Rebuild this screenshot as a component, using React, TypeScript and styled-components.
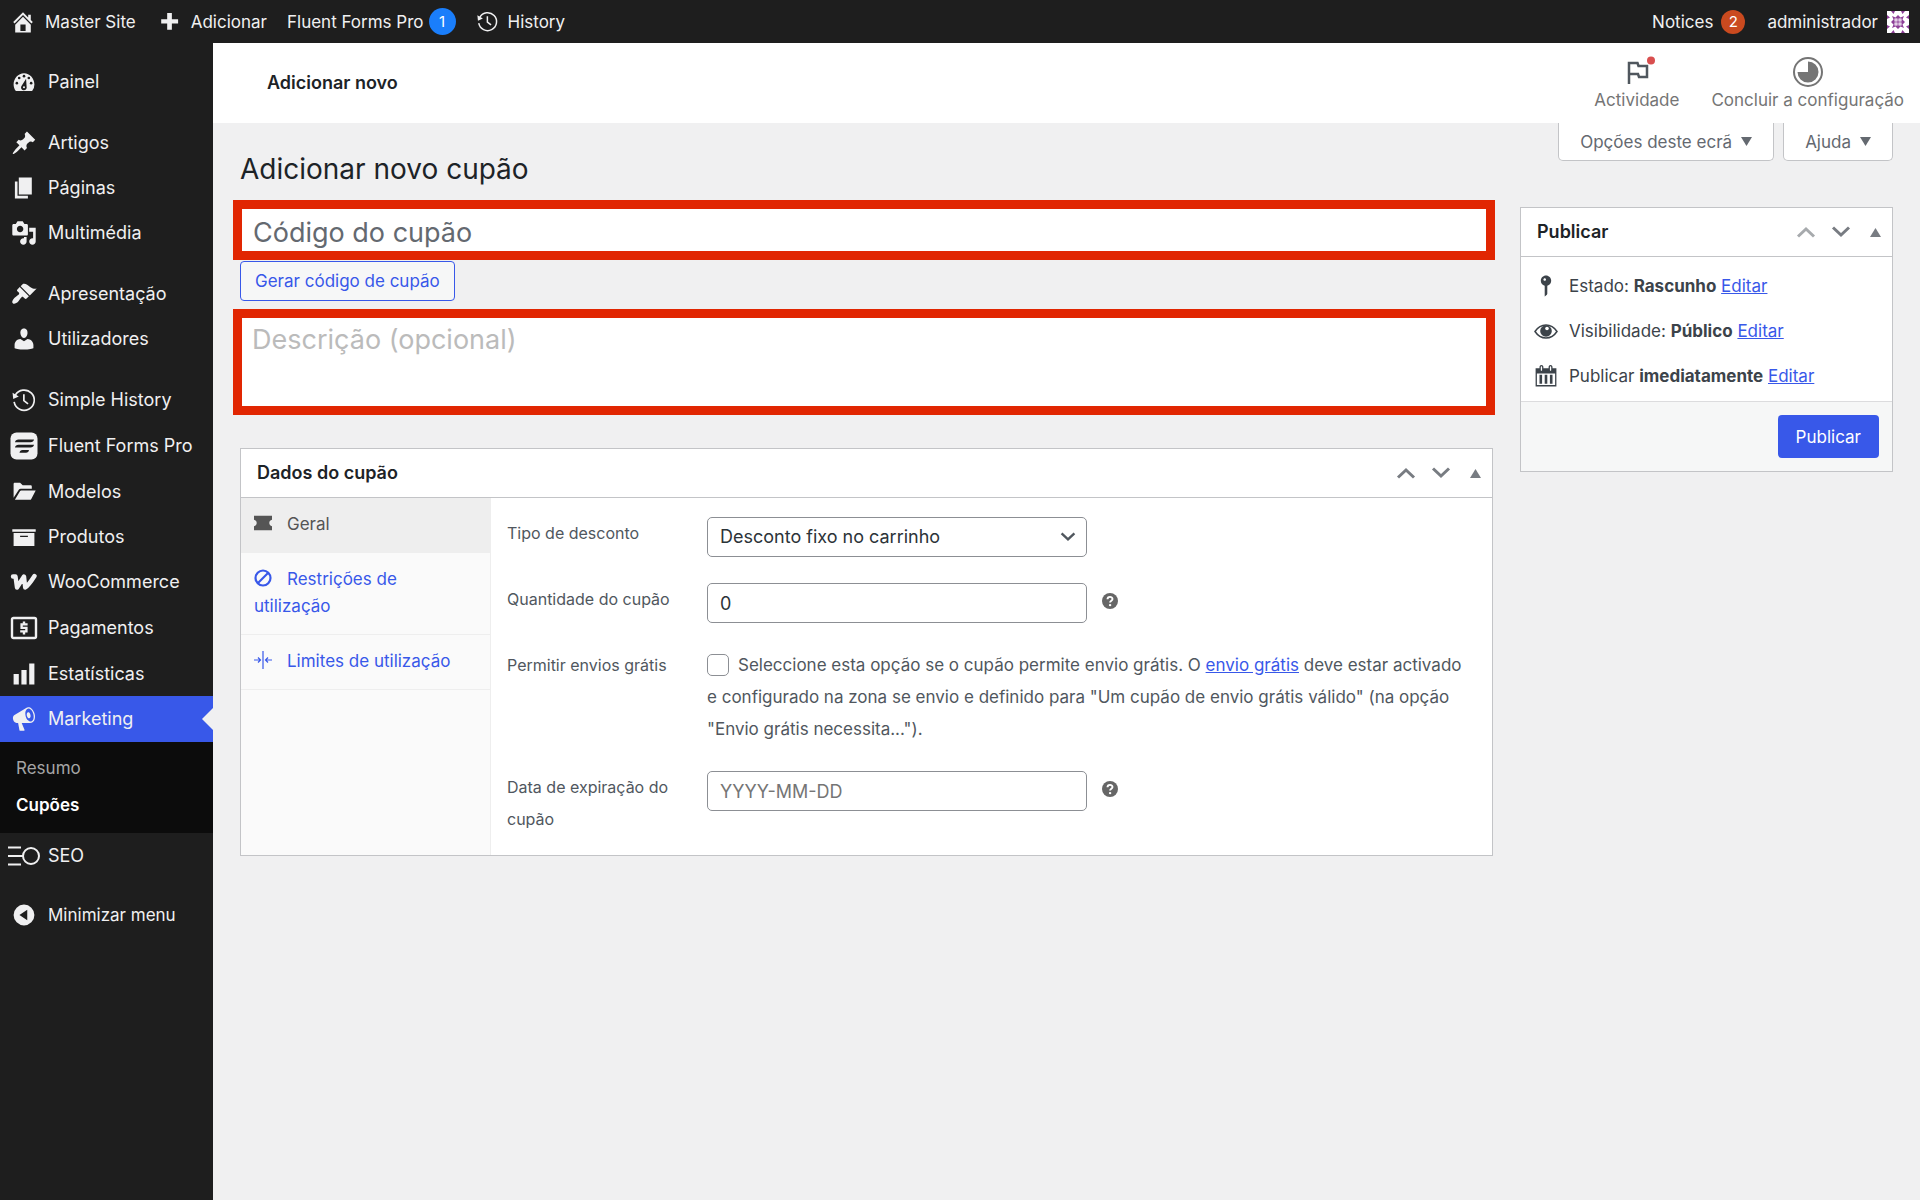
import React from 'react';
import styled, { createGlobalStyle, css } from 'styled-components';

const blue = '#3858e9';
const ink = '#1d2327';

const GlobalStyle = createGlobalStyle`
  *, *::before, *::after { box-sizing: border-box; }
  body { margin: 0; background: #f0f0f1; color: #3c434a; font: 17px/24px Inter, "Liberation Sans", sans-serif; }
  ul { list-style: none; margin: 0; padding: 0; }
  a { color: ${blue}; }
  button, input, select, textarea { font: inherit; color: inherit; }
  h1, h2, p { margin: 0; }
`;

const Page = styled.div`
  min-height: 100vh;
  display: flex;
  flex-direction: column;
`;

const AdminBar = styled.nav`
  height: 43px;
  flex: none;
  padding: 0 11px 0 10px;
  background: #1e1e1e;
  display: flex;
  align-items: center;
  justify-content: space-between;
`;

const BarGroup = styled.div<{ $gap: number }>`
  display: flex;
  align-items: center;
  gap: ${(p) => p.$gap}px;
`;

const BarLink = styled.a<{ $gap?: number }>`
  display: flex;
  align-items: center;
  gap: ${(p) => p.$gap ?? 9}px;
  color: #f0f0f1;
  text-decoration: none;
  white-space: nowrap;
`;

const Badge = styled.span<{ $color: string; $size: number }>`
  min-width: ${(p) => p.$size}px;
  height: ${(p) => p.$size}px;
  border-radius: 14px;
  background: ${(p) => p.$color};
  color: #fff;
  font-size: 15px;
  line-height: ${(p) => p.$size}px;
  text-align: center;
`;

const Body = styled.div`
  flex: 1;
  display: flex;
`;

const Sidebar = styled.nav`
  width: 213px;
  flex: none;
  padding-top: 16px;
  background: #1e1e1e;
`;

const MenuGroup = styled.ul`
  margin-bottom: 16px;
`;

const itemStyles = css<{ $tall?: boolean; $active?: boolean }>`
  width: 100%;
  height: ${(p) => (p.$tall ? 46 : 45)}px;
  padding: 0 0 0 8px;
  border: 0;
  display: flex;
  align-items: center;
  gap: 8px;
  background: ${(p) => (p.$active ? blue : 'transparent')};
  color: #f0f0f1;
  font-size: 18px;
  text-decoration: none;
  white-space: nowrap;
`;

const MenuLink = styled.a<{ $tall?: boolean; $active?: boolean }>`
  ${itemStyles}
  position: relative;
  ${(p) =>
    p.$active &&
    css`
      &::after {
        content: '';
        position: absolute;
        right: 0;
        top: 12px;
        border: 11px solid transparent;
        border-left-width: 0;
        border-right-color: #f0f0f1;
      }
    `}
`;

const CollapseButton = styled.button`
  ${itemStyles}
  height: 40px;
  font-size: 17px;
`;

const IconSlot = styled.span<{ $size?: number }>`
  flex: none;
  width: ${(p) => p.$size ?? 32}px;
  display: inline-flex;
  align-items: center;
  justify-content: center;
`;

const SubMenu = styled.ul`
  padding: 8px 0 9px;
  background: #0c0c0c;
`;

const SubLink = styled.a<{ $current?: boolean }>`
  display: block;
  padding: 0 16px;
  font-size: 17px;
  line-height: 37px;
  text-decoration: none;
  color: ${(p) => (p.$current ? '#fff' : '#a5a5a5')};
  font-weight: ${(p) => (p.$current ? 600 : 400)};
`;

const Content = styled.div`
  flex: 1;
  min-width: 0;
`;

const Header = styled.header`
  height: 80px;
  padding: 0 16px 0 54px;
  background: #fff;
  display: flex;
  align-items: center;
  justify-content: space-between;
`;

const HeaderTitle = styled.h2`
  font-size: 18px;
  font-weight: 600;
  color: ${ink};
`;

const HeaderActions = styled.div`
  display: flex;
  gap: 32px;
`;

const HeaderButton = styled.button`
  padding: 2px 0 0;
  border: 0;
  background: none;
  display: flex;
  flex-direction: column;
  align-items: center;
  color: #757575;
  font-size: 17px;
  svg { overflow: visible; }
`;

const MetaTabs = styled.div`
  display: flex;
  justify-content: flex-end;
  gap: 9px;
`;

const MetaTab = styled.button`
  height: 38px;
  padding: 0 21px;
  border: 1px solid #c3c4c7;
  border-top: 0;
  border-radius: 0 0 5px 5px;
  background: #fff;
  color: #646970;
  display: flex;
  align-items: center;
  gap: 9px;
`;

const Workspace = styled.main`
  padding: 0 27px 40px;
`;

const PageTitle = styled.h1`
  padding: 26px 0 11px;
  font-size: 28px;
  font-weight: 400;
  line-height: 40px;
  color: ${ink};
`;

const TitleRow = styled.div`
  display: flex;
  justify-content: space-between;
  align-items: flex-start;
`;

const Columns = styled.div`
  display: grid;
  grid-template-columns: minmax(0, 1fr) 373px;
  gap: 27px;
  align-items: start;
`;

const MainColumn = styled.div`
  min-width: 0;
`;

const SideColumn = styled.aside`
  padding-top: 7px;
`;

const Highlight = styled.div`
  margin: 0 -2px 0 -7px;
  border: 9px solid #e12602;
  background: #fff;
  display: flex;
`;

const TitleInput = styled.input`
  width: 100%;
  height: 42px;
  padding: 4px 11px 0;
  border: 0;
  outline: 0;
  background: none;
  font-size: 27px;
  &::placeholder { color: #646970; opacity: 1; }
`;

const DescriptionInput = styled.textarea`
  width: 100%;
  height: 88px;
  padding: 4px 10px;
  border: 0;
  outline: 0;
  resize: none;
  display: block;
  background: none;
  font-size: 27px;
  line-height: 36px;
  &::placeholder { color: #bbb; opacity: 1; }
`;

const OutlineButton = styled.button`
  display: block;
  height: 40px;
  margin: 1px 0 8px;
  padding: 0 14px;
  border: 1px solid ${blue};
  border-radius: 4px;
  background: #f6f7f7;
  color: ${blue};
`;

const Box = styled.section<{ $top?: number }>`
  margin-top: ${(p) => p.$top ?? 0}px;
  border: 1px solid #c3c4c7;
  background: #fff;
`;

const BoxHead = styled.div`
  height: 49px;
  padding: 0 7px 0 16px;
  border-bottom: 1px solid #c3c4c7;
  display: flex;
  align-items: center;
  justify-content: space-between;
`;

const BoxTitle = styled.h2`
  font-size: 18px;
  font-weight: 600;
  color: ${ink};
`;

const Handles = styled.div`
  display: flex;
  align-items: center;
`;

const Handle = styled.button<{ $muted?: boolean }>`
  width: 35px;
  height: 35px;
  padding: 0;
  border: 0;
  background: none;
  display: flex;
  align-items: center;
  justify-content: center;
  color: ${(p) => (p.$muted ? '#a7aaad' : '#787c82')};
  &:last-child { width: 20px; margin-left: 7px; }
`;

const CouponBody = styled.div`
  display: grid;
  grid-template-columns: 250px minmax(0, 1fr);
`;

const Tabs = styled.ul`
  background: #fafafa;
  border-right: 1px solid #eee;
`;

const Tab = styled.a<{ $active?: boolean }>`
  display: block;
  padding: 13px 13px 14px;
  border-bottom: 1px solid #eee;
  line-height: 27px;
  text-decoration: none;
  background: ${(p) => (p.$active ? '#eee' : 'transparent')};
  color: ${(p) => (p.$active ? '#555' : blue)};
  svg { margin-right: 15px; vertical-align: -2px; }
`;

const Form = styled.form`
  padding: 19px 16px 20px;
  display: flex;
  flex-direction: column;
  gap: 26px;
`;

const Row = styled.div`
  display: grid;
  grid-template-columns: 184px minmax(0, 1fr);
  gap: 16px;
  color: #50575e;
`;

const RowLabel = styled.label`
  font-size: 16px;
  line-height: 32px;
`;

const Control = styled.div`
  display: flex;
  gap: 15px;
  align-items: flex-start;
`;

const fieldStyles = css`
  width: 380px;
  max-width: 100%;
  height: 40px;
  padding: 0 12px;
  border: 1px solid #8c8f94;
  border-radius: 5px;
  background: #fff;
  color: #2c3338;
  font-size: 18px;
`;

const TextInput = styled.input`
  ${fieldStyles}
  &::placeholder { color: #757575; opacity: 1; }
`;

const SelectWrap = styled.div`
  display: grid;
  align-items: center;
  > * { grid-area: 1 / 1; }
  svg { justify-self: end; margin-right: 11px; pointer-events: none; }
`;

const Select = styled.select`
  ${fieldStyles}
  appearance: none;
`;

const HelpButton = styled.button`
  height: 36px;
  padding: 0;
  border: 0;
  background: none;
  color: #666;
  display: flex;
  align-items: center;
`;

const Note = styled.p`
  font-size: 17px;
  line-height: 32px;
`;

const CheckBox = styled.input`
  appearance: none;
  width: 22px;
  height: 22px;
  margin: 0 9px 0 0;
  border: 1px solid #8c8f94;
  border-radius: 5px;
  background: #fff;
  vertical-align: -5px;
`;

const StatusList = styled.ul`
  padding: 6px 12px 3px;
`;

const StatusItem = styled.li`
  display: flex;
  align-items: center;
  gap: 10px;
  height: 45px;
`;

const BoxFooter = styled.div`
  padding: 13px;
  border-top: 1px solid #dcdcde;
  background: #f6f7f7;
  display: flex;
  justify-content: flex-end;
`;

const PrimaryButton = styled.button`
  height: 43px;
  padding: 0 18px;
  border: 0;
  border-radius: 4px;
  background: ${blue};
  color: #fff;
`;

type IconProps = { d: string; size?: number };
const Dash = ({ d, size = 26 }: IconProps) => (
  <svg width={size} height={size} viewBox="0 0 20 20" fill="currentColor" fillRule="evenodd" aria-hidden="true">
    <path d={d} />
  </svg>
);

const paths = {
  home: 'M16 8.5l1.53 1.53-1.06 1.06L10 4.6l-6.47 6.49-1.06-1.06L10 2.5l4 4v-2h2v4zm-6-2.46l6 5.99V18H4v-5.97zM12 17v-5H8v5h4z',
  plus: 'M17 7.8v3.4h-4.8V16H8.6v-4.8H4V7.8h4.6V3h3.6v4.8z',
  post: 'M10.44 3.02l1.82-1.82 6.36 6.35-1.83 1.82c-1.05-.68-2.48-.57-3.41.36l-.75.75c-.92.93-1.04 2.35-.35 3.41l-1.83 1.82-2.41-2.41-2.8 2.79c-.42.42-3.38 2.71-3.8 2.29s1.86-3.39 2.28-3.81l2.79-2.79L4.1 9.36l1.83-1.82c1.05.69 2.48.57 3.4-.36l.75-.75c.93-.92 1.05-2.35.36-3.41z',
  page: 'M6 15V2h10v13H6zm-1 1h8v2H3V5h2v11z',
  media:
    'M13 11V4c0-.55-.45-1-1-1h-1.67L9 1H5L3.67 3H2c-.55 0-1 .45-1 1v7c0 .55.45 1 1 1h10c.55 0 1-.45 1-1zM7 4.5c1.38 0 2.5 1.12 2.5 2.5S8.38 9.5 7 9.5 4.5 8.38 4.5 7 5.62 4.5 7 4.5zM14 6h5v10.5c0 1.38-1.12 2.5-2.5 2.5S14 17.88 14 16.5s1.12-2.5 2.5-2.5c.17 0 .34.02.5.05V9h-3V6zm-4 8.05V13h2v3.5c0 1.38-1.12 2.5-2.5 2.5S7 17.88 7 16.5 8.12 14 9.5 14c.17 0 .34.02.5.05z',
  appearance:
    'M14.48 11.06L7.41 3.99l1.5-1.5c.5-.56 2.3-.47 3.51.32 1.21.8 1.43 1.28 2.91 2.1 1.18.64 2.45 1.26 4.45.85zm-.71.71L6.7 4.7 4.93 6.47c-.39.39-.39 1.02 0 1.41l1.06 1.06c.39.39.39 1.03 0 1.42-.6.6-1.43 1.11-2.21 1.69-.35.26-.7.53-1.01.84C1.43 14.23.4 16.08 1.4 17.07c.99 1 2.84-.03 4.18-1.36.31-.31.58-.66.85-1.02.57-.78 1.08-1.61 1.69-2.21.39-.39 1.02-.39 1.41 0l1.06 1.06c.39.39 1.02.39 1.41 0z',
  users:
    'M10 9.25c-2.27 0-2.73-3.44-2.73-3.44C7 4.02 7.82 2 9.97 2c2.16 0 2.98 2.02 2.71 3.81 0 0-.41 3.44-2.68 3.44zm0 2.57L12.72 10c2.39 0 4.52 2.33 4.52 4.53v2.49s-3.65 1.13-7.24 1.13c-3.65 0-7.24-1.13-7.24-1.13v-2.49c0-2.25 1.94-4.48 4.47-4.48z',
  folder: 'M2 14.500V3.800c0-.6.4-1 1-1h4l2 2h6c.6 0 1 .4 1 1V7.500H7.500c-.7 0-1.200.300-1.500.800zM3 16l4-6.700c.2-.3.5-.5.9-.5H19l-3.400 6.500c-.2.4-.6.7-1 .7z',
  archive: 'M19 4v2H1V4h18zM2 7h16v10H2V7zm11 3V9H7v1h6z',
  chart: 'M18 18V2h-4v16h4zm-6 0V7H8v11h4zm-6 0v-8H2v8h4z',
  megaphone:
    'M18.15 5.94c.46 1.62.38 3.22-.02 4.48-.42 1.28-1.26 2.18-2.3 2.48-.16.06-.26.06-.4.06-.06.02-.12.02-.18.02-.06.02-.14.02-.22.02h-6.8l2.22 5.5c.02.14-.06.26-.14.34-.08.1-.24.16-.34.16H6.95c-.1 0-.26-.06-.34-.16-.08-.08-.16-.2-.14-.34l-1-5.5H4.25l-.02-.02c-.5.06-1.08-.18-1.54-.62s-.88-1.08-1.06-1.88c-.24-.8-.2-1.56-.02-2.2.18-.62.58-1.08 1.06-1.3l.02-.02 9-5.4c.1-.06.18-.1.24-.16.06-.04.14-.08.24-.12.16-.08.28-.12.5-.18 1.04-.3 2.24.1 3.22.98s1.84 2.24 2.26 3.86zm-2.58 5.98h-.02c.4-.1.74-.34 1.04-.7.58-.7.86-1.76.86-3.04 0-.64-.1-1.3-.28-1.98-.34-1.36-1.02-2.5-1.78-3.24s-1.68-1.1-2.46-.88c-.82.22-1.4.96-1.7 2-.32 1.04-.28 2.36.06 3.72.38 1.36 1 2.5 1.8 3.24.78.74 1.62 1.1 2.48.88zm-2.54-7.08c.22-.04.42-.02.62.04.38.16.76.48 1.02 1s.42 1.2.42 1.78c0 .3-.04.56-.12.8-.18.48-.44.84-.86.94-.34.1-.8-.06-1.14-.4s-.64-.86-.78-1.5c-.18-.62-.12-1.24.02-1.72s.48-.84.82-.94z',
  collapse: 'M10 2a8 8 0 1 0 0 16 8 8 0 0 0 0-16zM12.5 6v8L6.5 10z',
  pin: 'M14 6c0 1.86-1.28 3.41-3 3.86V16c0 1-2 2-2 2V9.86c-1.72-.45-3-2-3-3.86 0-2.21 1.79-4 4-4s4 1.79 4 4zM8 5c0 .55.45 1 1 1s1-.45 1-1-.45-1-1-1-1 .45-1 1z',
  calendar:
    'M15 4h3v14H2V4h3V3c0-.83.67-1.5 1.5-1.5S8 2.17 8 3v1h4V3c0-.83.67-1.5 1.5-1.5S15 2.17 15 3v1zM6 3v2.5c0 .28.22.5.5.5s.5-.22.5-.5V3c0-.28-.22-.5-.5-.5S6 2.72 6 3zm7 0v2.5c0 .28.22.5.5.5s.5-.22.5-.5V3c0-.28-.22-.5-.5-.5s-.5.22-.5.5zm4 14V8H3v9h14zM7 16V9H5v7h2zm4 0V9H9v7h2zm4 0V9h-2v7h2z',
  ticket: 'M0 2h20v4.5c-2 .5-3 1.8-3 3.5s1 3 3 3.5V18H0v-4.5c2-.5 3-1.8 3-3.5s-1-3-3-3.5z',
};

const DashboardIcon = () => (
  <svg width="26" height="26" viewBox="0 0 20 20" aria-hidden="true">
    <path fill="currentColor" d="M3.76 17h12.48A7.8 7.8 0 0 0 18 11.9C18 7.2 14.4 3.2 10 3.2s-8 4-8 8.7c0 1.9.66 3.8 1.76 5.1z" />
    <g fill="#1e1e1e">
      <circle cx="10" cy="5.5" r="1" />
      <circle cx="6.3" cy="6.9" r="1" />
      <circle cx="13.7" cy="6.9" r="1" />
      <circle cx="4.5" cy="10.9" r="1" />
      <circle cx="15.5" cy="10.9" r="1" />
      <path d="M11.6 7.5L12 13.5a2.2 2.2 0 1 1-3.8-.7z" />
    </g>
    <circle cx="10" cy="14" r=".8" fill="currentColor" />
  </svg>
);

const HistoryIcon = ({ size = 26 }: { size?: number }) => (
  <svg width={size} height={size} viewBox="0 0 20 20" fill="none" stroke="currentColor" strokeWidth="1.3" aria-hidden="true">
    <path d="M3.3 6.3A7.8 7.8 0 1 1 2.4 11.500" />
    <path d="M9.9 5.5v5l3.2 2.5" />
    <path d="M1.2 4.5l.5 4.8 4.3-2z" fill="currentColor" stroke="none" />
  </svg>
);

const FluentIcon = () => (
  <svg width="28" height="28" viewBox="0 0 28 28" aria-hidden="true">
    <rect x=".5" y=".5" width="27" height="27" rx="6" fill="currentColor" />
    <g fill="#1e1e1e">
      <path d="M8.5 7.5H24c-.3 1.900-1.600 2.700-3.500 2.700H5c.3-1.900 1.600-2.700 3.500-2.700z" />
      <path d="M8.5 12.800H24c-.3 1.900-1.600 2.700-3.500 2.700H5c.3-1.900 1.600-2.700 3.500-2.700z" />
      <path d="M12.500 18H19c-.3 1.900-1.400 2.700-3 2.700H9.500c.3-1.900 1.400-2.700 3-2.700z" />
    </g>
  </svg>
);

const WooIcon = () => (
  <svg width="28" height="18" viewBox="0 0 28 18" fill="none" stroke="currentColor" strokeWidth="4.4" strokeLinecap="round" strokeLinejoin="round" aria-hidden="true">
    <path d="M3 3.5h2.5l1.5 11L14 3.5l1.2 11C17.5 13 21 8.5 24.5 3" />
  </svg>
);

const PaymentsIcon = () => (
  <svg width="28" height="24" viewBox="0 0 28 24" fill="none" stroke="currentColor" strokeWidth="2.4" aria-hidden="true">
    <rect x="2" y="2" width="24" height="20" rx="1.5" />
    <path d="M17.6 8.400h-6v3.500h4.800v3.500h-6.200M14 5.500v3M14 15v3.500" strokeWidth="2.400" />
  </svg>
);

const SeoIcon = () => (
  <svg width="32" height="20" viewBox="0 0 32 20" fill="none" stroke="currentColor" strokeWidth="2" aria-hidden="true">
    <path d="M0 1.5h13M0 10h15M0 18.5h13" />
    <circle cx="23" cy="10" r="8" />
  </svg>
);

const AvatarIcon = () => (
  <svg width="22" height="22" viewBox="0 0 22 22" aria-hidden="true">
    <rect width="22" height="22" fill="#fff" />
    <g fill="#8d3f97">
      <path d="M4 0h4L6.500 3zM14 0h4l-2.500 3zM4 22h4l-1.500-3zM14 22h4l-2.500-3z" />
      <path d="M0 4v4l3-1.500zM0 14v4l3-2.500zM22 4v4l-3-1.500zM22 14v4l-3-2.500z" />
      <path d="M5 5l3.500 1.500L11 4l2.500 2.500L17 5l-1.500 3.500L18 11l-2.500 2.500L17 17l-3.500-1.500L11 18l-2.500-2.500L5 17l1.500-3.500L4 11l2.500-2.500z" />
    </g>
    <path d="M7.500 7.500h3v3h-3zM11.500 7.500h3v3h-3zM7.500 11.500h3v3h-3zM11.500 11.500h3v3h-3z" fill="#fff" />
    <path d="M8.500 8.500h1v1h-1zM12.500 8.500h1v1h-1zM8.500 12.500h1v1h-1zM12.500 12.500h1v1h-1z" fill="#8d3f97" />
  </svg>
);

const FlagIcon = () => (
  <svg width="32" height="32" viewBox="0 0 32 32" fill="none" aria-hidden="true">
    <path d="M8 28V7h8.5l1 3H26v11h-8l-1-3H8" stroke="#50575e" strokeWidth="2.5" />
    <circle cx="30" cy="4.5" r="4" fill="#d94f4f" />
  </svg>
);

const ProgressIcon = () => (
  <svg width="32" height="32" viewBox="0 0 32 32" aria-hidden="true">
    <circle cx="16" cy="16" r="14" fill="none" stroke="#757575" strokeWidth="2" />
    <path d="M16 16V5.500A10.500 10.500 0 1 1 5.500 16z" fill="#757575" />
  </svg>
);

const Chevron = ({ up, small }: { up?: boolean; small?: boolean }) => (
  <svg width={small ? 16 : 20} height={small ? 10 : 12} viewBox="0 0 20 12" fill="none" stroke="currentColor" strokeWidth="3" aria-hidden="true">
    <path d={up ? 'M2 10.5l8-7.5 8 7.5' : 'M2 1.5L10 9l8-7.5'} />
  </svg>
);

const Triangle = ({ up }: { up?: boolean }) => (
  <svg width="11" height="9" viewBox="0 0 11 9" fill="currentColor" aria-hidden="true">
    <path d={up ? 'M5.5 0L11 9H0z' : 'M0 0h11L5.5 9z'} />
  </svg>
);

const ForbiddenIcon = () => (
  <svg width="18" height="18" viewBox="0 0 18 18" fill="none" stroke="currentColor" strokeWidth="2.2" aria-hidden="true">
    <circle cx="9" cy="9" r="7.5" />
    <path d="M4 14L14 4" />
  </svg>
);

const LimitIcon = () => (
  <svg width="18" height="18" viewBox="0 0 18 18" fill="none" stroke="currentColor" strokeWidth="1.2" aria-hidden="true">
    <path d="M9 0v18M0 9h6M18 9h-6M4 6.5L6.5 9 4 11.5M14 6.5L11.5 9l2.5 2.5" />
  </svg>
);

const EyeIcon = () => (
  <svg width="26" height="26" viewBox="0 0 26 26" fill="none" aria-hidden="true">
    <path d="M2 13.5C5 9 9 7 13 7s8 2 11 6.5C21 18 17 20 13 20S5 18 2 13.500z" stroke="currentColor" strokeWidth="1.5" />
    <circle cx="13" cy="13" r="5.8" fill="currentColor" />
    <circle cx="14" cy="10.5" r="1.8" fill="#fff" />
  </svg>
);

const HelpIcon = () => (
  <svg width="16" height="16" viewBox="0 0 16 16" fill="none" aria-hidden="true">
    <circle cx="8" cy="8" r="8" fill="currentColor" />
    <path d="M5.5 6.3C5.5 3 10.5 3.2 10.5 6c0 1.7-2.4 1.7-2.4 3.6" stroke="#fff" strokeWidth="1.9" />
    <circle cx="8.1" cy="12.1" r="1.2" fill="#fff" />
  </svg>
);

type Item = { label: string; icon: React.ReactNode; tall?: boolean; active?: boolean; sub?: string[] };

const groups: Item[][] = [
  [{ label: 'Painel', icon: <DashboardIcon /> }],
  [
    { label: 'Artigos', icon: <Dash d={paths.post} /> },
    { label: 'Páginas', icon: <Dash d={paths.page} /> },
    { label: 'Multimédia', icon: <Dash d={paths.media} /> },
  ],
  [
    { label: 'Apresentação', icon: <Dash d={paths.appearance} /> },
    { label: 'Utilizadores', icon: <Dash d={paths.users} /> },
  ],
  [
    { label: 'Simple History', icon: <HistoryIcon />, tall: true },
    { label: 'Fluent Forms Pro', icon: <FluentIcon />, tall: true },
    { label: 'Modelos', icon: <Dash d={paths.folder} /> },
    { label: 'Produtos', icon: <Dash d={paths.archive} /> },
    { label: 'WooCommerce', icon: <WooIcon />, tall: true },
    { label: 'Pagamentos', icon: <PaymentsIcon />, tall: true },
    { label: 'Estatísticas', icon: <Dash d={paths.chart} /> },
    { label: 'Marketing', icon: <Dash d={paths.megaphone} />, tall: true, active: true, sub: ['Resumo', 'Cupões'] },
    { label: 'SEO', icon: <SeoIcon />, tall: true },
  ],
];

const BoxHandles = ({ firstMuted }: { firstMuted?: boolean }) => (
  <Handles>
    <Handle type="button" aria-label="Mover para cima" $muted={firstMuted}><Chevron up /></Handle>
    <Handle type="button" aria-label="Mover para baixo"><Chevron /></Handle>
    <Handle type="button" aria-label="Alternar painel"><Triangle up /></Handle>
  </Handles>
);

export default function App() {
  return (
    <Page>
      <GlobalStyle />
      <AdminBar>
        <BarGroup $gap={20}>
          <BarLink href="#"><Dash d={paths.home} />Master Site</BarLink>
          <BarLink href="#"><Dash d={paths.plus} />Adicionar</BarLink>
          <BarLink href="#" $gap={5}>Fluent Forms Pro<Badge $color="#1a7efb" $size={27}>1</Badge></BarLink>
          <BarLink href="#"><HistoryIcon size={23} />History</BarLink>
        </BarGroup>
        <BarGroup $gap={22}>
          <BarLink href="#" $gap={8}>Notices<Badge $color="#ca4a1f" $size={24}>2</Badge></BarLink>
          <BarLink href="#">administrador<AvatarIcon /></BarLink>
        </BarGroup>
      </AdminBar>
      <Body>
        <Sidebar>
          {groups.map((group) => (
            <MenuGroup key={group[0].label}>
              {group.map((item) => (
                <li key={item.label}>
                  <MenuLink href="#" $tall={item.tall} $active={item.active}>
                    <IconSlot>{item.icon}</IconSlot>
                    {item.label}
                  </MenuLink>
                  {item.sub && (
                    <SubMenu>
                      {item.sub.map((s) => (
                        <li key={s}><SubLink href="#" $current={s === 'Cupões'}>{s}</SubLink></li>
                      ))}
                    </SubMenu>
                  )}
                </li>
              ))}
            </MenuGroup>
          ))}
          <CollapseButton type="button">
            <IconSlot><Dash d={paths.collapse} /></IconSlot>
            Minimizar menu
          </CollapseButton>
        </Sidebar>
        <Content>
          <Header>
            <HeaderTitle>Adicionar novo</HeaderTitle>
            <HeaderActions>
              <HeaderButton type="button"><FlagIcon />Actividade</HeaderButton>
              <HeaderButton type="button"><ProgressIcon />Concluir a configuração</HeaderButton>
            </HeaderActions>
          </Header>
          <Workspace>
            <TitleRow>
              <PageTitle>Adicionar novo cupão</PageTitle>
              <MetaTabs>
                <MetaTab type="button">Opções deste ecrã<Triangle /></MetaTab>
                <MetaTab type="button">Ajuda<Triangle /></MetaTab>
              </MetaTabs>
            </TitleRow>
            <Columns>
              <MainColumn>
                <Highlight><TitleInput type="text" placeholder="Código do cupão" aria-label="Código do cupão" /></Highlight>
                <OutlineButton type="button">Gerar código de cupão</OutlineButton>
                <Highlight><DescriptionInput placeholder="Descrição (opcional)" aria-label="Descrição (opcional)" /></Highlight>
                <Box $top={33}>
                  <BoxHead>
                    <BoxTitle>Dados do cupão</BoxTitle>
                    <BoxHandles />
                  </BoxHead>
                  <CouponBody>
                    <Tabs>
                      <li><Tab href="#" $active><Dash d={paths.ticket} size={18} />Geral</Tab></li>
                      <li><Tab href="#"><ForbiddenIcon />Restrições de utilização</Tab></li>
                      <li><Tab href="#"><LimitIcon />Limites de utilização</Tab></li>
                    </Tabs>
                    <Form>
                      <Row>
                        <RowLabel htmlFor="discount-type">Tipo de desconto</RowLabel>
                        <Control>
                          <SelectWrap>
                            <Select id="discount-type" defaultValue="fixed">
                              <option value="fixed">Desconto fixo no carrinho</option>
                            </Select>
                            <Chevron small />
                          </SelectWrap>
                        </Control>
                      </Row>
                      <Row>
                        <RowLabel htmlFor="amount">Quantidade do cupão</RowLabel>
                        <Control>
                          <TextInput id="amount" type="text" defaultValue="0" />
                          <HelpButton type="button" aria-label="Ajuda"><HelpIcon /></HelpButton>
                        </Control>
                      </Row>
                      <Row>
                        <RowLabel htmlFor="free-shipping">Permitir envios grátis</RowLabel>
                        <Note>
                          <CheckBox id="free-shipping" type="checkbox" />
                          Seleccione esta opção se o cupão permite envio grátis. O <a href="#">envio grátis</a> deve estar
                          activado e configurado na zona se envio e definido para "Um cupão de envio grátis válido" (na
                          opção "Envio grátis necessita...").
                        </Note>
                      </Row>
                      <Row>
                        <RowLabel htmlFor="expiry">Data de expiração do cupão</RowLabel>
                        <Control>
                          <TextInput id="expiry" type="text" placeholder="YYYY-MM-DD" />
                          <HelpButton type="button" aria-label="Ajuda"><HelpIcon /></HelpButton>
                        </Control>
                      </Row>
                    </Form>
                  </CouponBody>
                </Box>
              </MainColumn>
              <SideColumn>
                <Box>
                  <BoxHead>
                    <BoxTitle>Publicar</BoxTitle>
                    <BoxHandles firstMuted />
                  </BoxHead>
                  <StatusList>
                    <StatusItem><IconSlot $size={26}><Dash d={paths.pin} /></IconSlot><span>Estado: <b>Rascunho</b> <a href="#">Editar</a></span></StatusItem>
                    <StatusItem><IconSlot $size={26}><EyeIcon /></IconSlot><span>Visibilidade: <b>Público</b> <a href="#">Editar</a></span></StatusItem>
                    <StatusItem><IconSlot $size={26}><Dash d={paths.calendar} /></IconSlot><span>Publicar <b>imediatamente</b> <a href="#">Editar</a></span></StatusItem>
                  </StatusList>
                  <BoxFooter><PrimaryButton type="button">Publicar</PrimaryButton></BoxFooter>
                </Box>
              </SideColumn>
            </Columns>
          </Workspace>
        </Content>
      </Body>
    </Page>
  );
}
